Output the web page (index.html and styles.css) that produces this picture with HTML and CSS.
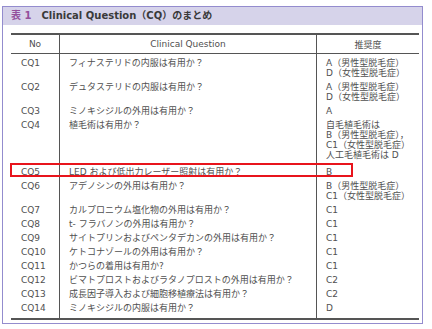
FILE: index.html
```html
<!DOCTYPE html>
<html>
  <head>
    <title>Clinical Question のまとめ</title>
    <link rel="stylesheet" href="styles.css">
  </head>
  <body>
    <div class="frame">
      <div class="caption">
        <span class="num">表 1</span>　Clinical Question（CQ）のまとめ
      </div>
      <table>
        <tr>
          <th class="no">No</th>
          <th>Clinical Question</th>
          <th class="grade">推奨度</th>
        </tr>
        <tr>
          <td class="no">CQ1</td>
          <td>フィナステリドの内服は有用か？</td>
          <td class="grade">A（男性型脱毛症）<br>D（女性型脱毛症）</td>
        </tr>
        <tr>
          <td class="no">CQ2</td>
          <td>デュタステリドの内服は有用か？</td>
          <td class="grade">A（男性型脱毛症）<br>D（女性型脱毛症）</td>
        </tr>
        <tr>
          <td class="no">CQ3</td>
          <td>ミノキシジルの外用は有用か？</td>
          <td class="grade">A</td>
        </tr>
        <tr class="tall">
          <td class="no">CQ4</td>
          <td>植毛術は有用か？</td>
          <td class="grade">自毛植毛術は<br>B（男性型脱毛症），<br>C1（女性型脱毛症）<br>人工毛植毛術は D</td>
        </tr>
        <tr>
          <td class="no hl">CQ5<span class="mark"></span></td>
          <td>LED および低出力レーザー照射は有用か？</td>
          <td class="grade">B</td>
        </tr>
        <tr>
          <td class="no">CQ6</td>
          <td>アデノシンの外用は有用か？</td>
          <td class="grade">B（男性型脱毛症）<br>C1（女性型脱毛症）</td>
        </tr>
        <tr>
          <td class="no">CQ7</td>
          <td>カルプロニウム塩化物の外用は有用か？</td>
          <td class="grade">C1</td>
        </tr>
        <tr>
          <td class="no">CQ8</td>
          <td>t- フラバノンの外用は有用か？</td>
          <td class="grade">C1</td>
        </tr>
        <tr>
          <td class="no">CQ9</td>
          <td>サイトプリンおよびペンタデカンの外用は有用か？</td>
          <td class="grade">C1</td>
        </tr>
        <tr>
          <td class="no">CQ10</td>
          <td>ケトコナゾールの外用は有用か？</td>
          <td class="grade">C1</td>
        </tr>
        <tr>
          <td class="no">CQ11</td>
          <td>かつらの着用は有用か?</td>
          <td class="grade">C1</td>
        </tr>
        <tr>
          <td class="no">CQ12</td>
          <td>ビマトプロストおよびラタノプロストの外用は有用か？</td>
          <td class="grade">C2</td>
        </tr>
        <tr>
          <td class="no">CQ13</td>
          <td>成長因子導入および細胞移植療法は有用か？</td>
          <td class="grade">C2</td>
        </tr>
        <tr class="last">
          <td class="no">CQ14</td>
          <td>ミノキシジルの内服は有用か？</td>
          <td class="grade">D</td>
        </tr>
      </table>
    </div>
  </body>
</html>
```

FILE: styles.css
```css
body {
  margin: 0;
  background-color: #ffffff;
  font-family: "DejaVu Sans", "Noto Sans CJK JP", sans-serif;
  color: #505050;
}

/* outer box with the lavender caption bar */
.frame {
  margin: 6px 0 0 2px;
  width: 419px;
  height: 316px;
  border: 1.5px solid #938cce;
  background-color: #ffffff;
}

.caption {
  height: 18px;
  line-height: 18px;
  padding-left: 8px;
  background-color: #d6d3ea;
  font-size: 10px;
  font-weight: 600;
  color: #3a3a3a;
  white-space: nowrap;
}

.caption .num {
  color: #94509c;
}

/* Style the table */
table {
  margin: 8px 0 0 8px;
  width: 408px;
  border-collapse: collapse;
  table-layout: fixed;
  font-size: 9px;
  border-top: 2px solid #555555;
  border-bottom: 2px solid #555555;
}

th {
  height: 18px;
  padding: 0;
  font-weight: normal;
  text-align: center;
  border-bottom: 1.5px solid #555555;
}

td {
  padding: 4px 0 0 9px;
  line-height: 10px;
  vertical-align: top;
  white-space: nowrap;
}

th.no,
td.no {
  width: 48px;
  border-right: 1.5px solid #555555;
}

td.no {
  padding-left: 10px;
}

th.grade,
td.grade {
  width: 102px;
  border-left: 1.5px solid #555555;
}

tr.tall td {
  padding-bottom: 3px;
}

tr.last td {
  padding-bottom: 5px;
}

/* red highlight round the CQ5 row */
td.hl {
  position: relative;
}

.mark {
  position: absolute;
  left: -1px;
  top: 0;
  width: 339px;
  height: 10px;
  border: 2px solid #e8141c;
}
```
